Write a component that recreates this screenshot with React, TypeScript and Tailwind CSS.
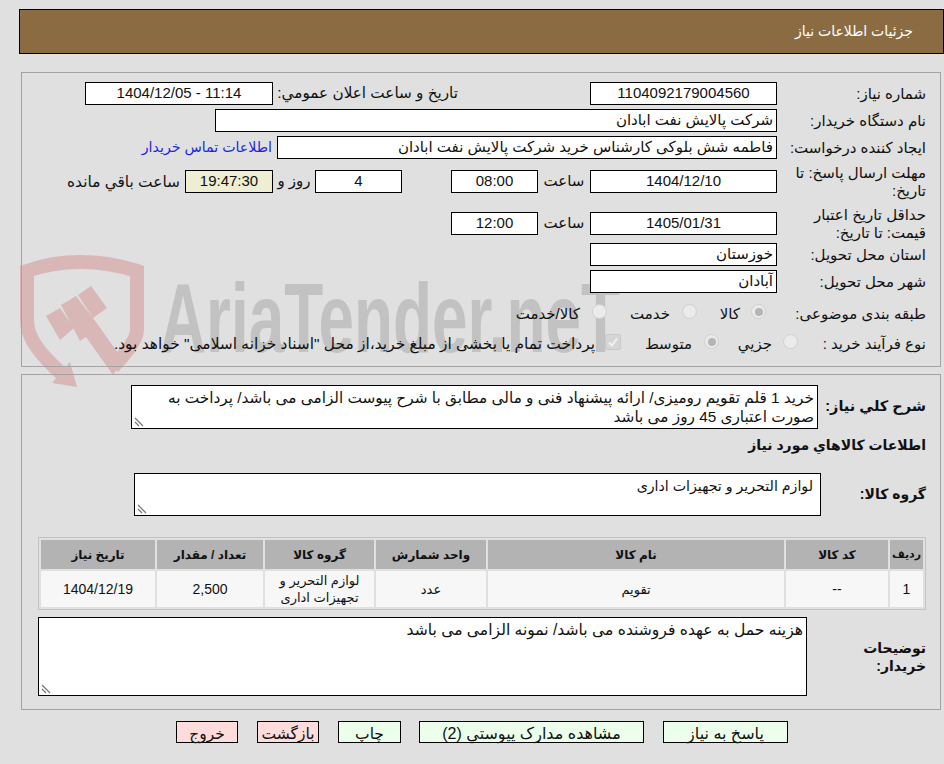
const font = "font-['Liberation_Sans','DejaVu_Sans',sans-serif]";
function Box({ w, text, center, bg, ml, ltr }: { w: number; text?: string; center?: boolean; bg?: string; ml?: number; ltr?: boolean }) {
  return (
    <div
      dir={ltr ? 'ltr' : undefined}
      className={`h-[23px] shrink-0 border border-black px-[3px] flex items-center whitespace-nowrap overflow-hidden ${center ? 'justify-center' : 'justify-start'} ${bg ?? 'bg-white'}`}
      style={{ width: w, marginLeft: ml ?? 0 }}
    >
      {text}
    </div>
  );
}
function Radio({ on }: { on?: boolean }) {
  return (
    <span className="w-[15px] h-[15px] rounded-full border border-[#cfcfcf] bg-[#ebebeb] flex items-center justify-center shrink-0 mb-[5px]">
      {on && <span className="w-[8px] h-[8px] rounded-full bg-[#b5b5b5]" />}
    </span>
  );
}
function Grip() {
  return (
    <svg className="absolute left-[2px] bottom-[1px]" width="10" height="10" viewBox="0 0 10 10">
      <path d="M1 1 L9 9 M1 5 L5 9" stroke="#777" strokeWidth="1.2" fill="none" />
    </svg>
  );
}
function Label({ children }: { children: React.ReactNode }) {
  return <div className="w-[149px] pl-[5px] shrink-0 leading-[18px]">{children}</div>;
}
const cols = [
  { w: 33, h: 'رديف', d: '1', n: true },
  { w: 102, h: 'کد کالا', d: '--', n: true },
  { w: 296, h: 'نام کالا', d: 'تقویم', n: false },
  { w: 110, h: 'واحد شمارش', d: 'عدد', n: false },
  { w: 109, h: 'گروه کالا', d: 'لوازم التحریر و تجهیزات اداری', n: false },
  { w: 106, h: 'تعداد / مقدار', d: '2,500', n: true },
  { w: 114, h: 'تاریخ نیاز', d: '1404/12/19', n: true },
];
export default function App() {
  return (
    <div dir="rtl" className={`${font} relative w-[944px] h-[764px] overflow-hidden bg-[#e0e0e0] text-[15px] text-[#111]`}>
      {/* watermark */}
      <svg dir="ltr" className="absolute left-[15px] top-[245px]" width="620" height="150" viewBox="0 0 620 150">
        <path d="M48 130 C20 105 12 90 12 75 L12 26 C45 14 85 14 122 26 L122 85 C122 95 108 112 98 122" fill="none" stroke="#d9b7b7" strokeWidth="14" />
        <path fill="#d9b7b7" d="M37 138 L62 142 L55 117 Z" />
        <path fill="#d9b7b7" d="M31 71 L45 63 L59 83 L45 95 Z M46 60 L61 51 L78 73 L108 115 L98 130 L71 92 L65 96 Z M63 50 L76 41 L92 63 L78 73 Z" />
        <text x="145" y="107" direction="ltr" fontFamily="'Liberation Sans', sans-serif" fontWeight="700" fontSize="98" fill="#c2c2c2" textLength="460" lengthAdjust="spacingAndGlyphs">AriaTender.neT</text>
      </svg>

      <div className="relative pt-[9px]">
        {/* header */}
        <div className="w-[925px] h-[45px] bg-[#8b6c42] border border-black flex items-center pr-[30px] text-white text-[14px]">
          جزئیات اطلاعات نیاز
        </div>

        {/* panel 1 */}
        <div className="mt-[18px] mr-[3px] w-[920px] h-[295px] border border-[#a3a3a3] pr-[14px] pt-[9px]">
          <div className="flex items-center">
            <Label>شماره نیاز:</Label>
            <Box w={187} text="1104092179004560" center ml={132} />
            <div className="w-[185px] shrink-0 whitespace-nowrap text-[15.25px]">تاریخ و ساعت اعلان عمومي:</div>
            <Box w={188} text="1404/12/05 - 11:14" center ltr />
          </div>
          <div className="flex items-center mt-[4px]">
            <Label>نام دستگاه خریدار:</Label>
            <Box w={562} text="شرکت پالایش نفت ابادان" />
          </div>
          <div className="flex items-center mt-[4px]">
            <Label>ایجاد کننده درخواست:</Label>
            <Box w={500} text="فاطمه شش بلوکی کارشناس خرید شرکت پالایش نفت ابادان" />
            <span className="mr-[5px] text-[#2222ee] whitespace-nowrap text-[14.2px]">اطلاعات تماس خریدار</span>
          </div>
          <div className="flex items-center mt-[6px] h-[33px]">
            <Label>مهلت ارسال پاسخ: تا تاریخ:</Label>
            <Box w={187} text="1404/12/10" center />
            <span className="w-[52px] shrink-0 text-center">ساعت</span>
            <Box w={87} text="08:00" center ml={49} />
            <Box w={87} text="4" center />
            <span className="w-[42px] shrink-0 text-center">روز و</span>
            <Box w={88} text="19:47:30" center bg="bg-[#eeeed2]" />
            <span className="mr-[5px] whitespace-nowrap text-[15.4px]">ساعت باقي مانده</span>
          </div>
          <div className="flex items-center mt-[7px] h-[37px]">
            <Label>حداقل تاریخ اعتبار قیمت: تا تاریخ:</Label>
            <Box w={187} text="1405/01/31" center />
            <span className="w-[52px] shrink-0 text-center">ساعت</span>
            <Box w={87} text="12:00" center />
          </div>
          <div className="flex items-center mt-[1px]">
            <Label>استان محل تحویل:</Label>
            <Box w={187} text="خوزستان" />
          </div>
          <div className="flex items-center mt-[4px]">
            <Label>شهر محل تحویل:</Label>
            <Box w={187} text="آبادان" />
          </div>
          <div className="flex items-center mt-[8px] h-[26px]">
            <Label>طبقه بندی موضوعی:</Label>
            <div className="w-[11px] shrink-0" />
            <Radio on />
            <span className="w-[54px] shrink-0 pr-[11px]">کالا</span>
            <Radio />
            <span className="w-[75px] shrink-0 pr-[12px]">خدمت</span>
            <Radio />
            <span className="pr-[12px] whitespace-nowrap">کالا/خدمت</span>
          </div>
          <div className="flex items-center mt-[4px] h-[26px]">
            <div className="w-[128px] shrink-0 leading-[18px]">نوع فرآیند خرید :</div>
            <Radio />
            <span className="w-[64px] shrink-0 pr-[11px]">جزیي</span>
            <Radio on />
            <span className="w-[83px] shrink-0 pr-[12px]">متوسط</span>
            <span className="w-[16px] h-[16px] rounded-[2px] bg-[#d5d5d5] border border-[#c9c9c9] flex items-center justify-center shrink-0 mb-[5px]">
              <svg width="12" height="12" viewBox="0 0 12 12"><path d="M2 6.5 L5 9.5 L10 2.5" stroke="#f2f2f2" strokeWidth="2" fill="none" /></svg>
            </span>
            <span className="pr-[10px] whitespace-nowrap text-[15.45px]">پرداخت تمام یا بخشی از مبلغ خرید،از محل "اسناد خزانه اسلامی" خواهد بود.</span>
          </div>
        </div>

        {/* panel 2 */}
        <div className="mt-[7px] mr-[3px] w-[920px] h-[336px] border border-[#a3a3a3] pr-[14px] pt-[10px]">
          <div className="flex items-center">
            <div className="w-[108px] shrink-0 font-bold text-[14.5px]">شرح کلي نیاز:</div>
            <div className="relative w-[687px] h-[44px] bg-white border border-black px-[3px] py-[2px] leading-[19px] text-[15.3px]">
              خرید 1 قلم تقویم رومیزی/ ارائه پیشنهاد فنی و مالی مطابق با شرح پیوست الزامی می باشد/ پرداخت به صورت اعتباری 45 روز می باشد
              <Grip />
            </div>
          </div>
          <div className="mt-[7px] font-bold leading-[18px] text-[14px]">اطلاعات کالاهاي مورد نیاز</div>
          <div className="flex items-center mt-[19px]">
            <div className="w-[105px] shrink-0 font-bold text-[14px]">گروه کالا:</div>
            <div className="relative w-[687px] h-[43px] bg-white border border-black px-[7px] py-[3px] leading-[18px] text-[14.2px]">
              لوازم التحریر و تجهیزات اداری
              <Grip />
            </div>
          </div>
          <div className="mt-[21px] w-[888px] border border-[#c4c4c4] p-[2px] text-[13px]">
            <div className="flex gap-[2px]">
              {cols.map((c) => (
                <div key={c.h} className={`h-[29px] bg-[#b3b3b3] flex items-center justify-center font-bold whitespace-nowrap shrink-0 ${c.h === 'رديف' ? 'text-[11px]' : 'text-[12px]'}`} style={{ width: c.w }}>
                  {c.h}
                </div>
              ))}
            </div>
            <div className="flex gap-[2px] mt-[2px]">
              {cols.map((c) => (
                <div key={c.h} className={`h-[36px] bg-[#f7f7f7] flex items-center justify-center text-center leading-[17px] shrink-0 px-[8px] ${c.n ? 'text-[14px]' : 'text-[13px]'}`} style={{ width: c.w }}>
                  {c.d}
                </div>
              ))}
            </div>
          </div>
          <div className="flex items-center mt-[7px]">
            <div className="w-[119px] shrink-0 font-bold leading-[18px] text-[14px]">
              <div>توضیحات</div>
              <div>خریدار:</div>
            </div>
            <div className="relative w-[769px] h-[79px] bg-white border border-black px-[3px] py-[3px] leading-[18px] text-[15.6px]">
              هزینه حمل به عهده فروشنده می باشد/ نمونه الزامی می باشد
              <Grip />
            </div>
          </div>
        </div>

        {/* buttons */}
        <div className="flex mt-[11px] pr-[156px] text-[15.5px]">
          <button className="w-[125px] h-[22px] border border-black bg-[#ebffeb] ml-[19px] text-[16px]">پاسخ به نیاز</button>
          <button className="w-[225px] h-[22px] border border-black bg-[#ebffeb] ml-[18px] text-[16px]">مشاهده مدارک پیوستي (2)</button>
          <button className="w-[63px] h-[22px] border border-black bg-[#ebffeb] ml-[19px]">چاپ</button>
          <button className="w-[62px] h-[22px] border border-black bg-[#ffdcdc] ml-[19px]">بازگشت</button>
          <button className="w-[62px] h-[22px] border border-black bg-[#ffdcdc]">خروج</button>
        </div>
      </div>
    </div>
  );
}
